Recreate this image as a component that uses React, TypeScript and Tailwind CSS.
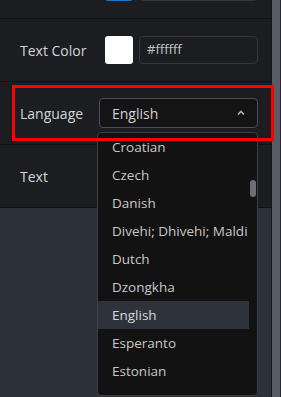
import React from "react";

const items = ["Croatian", "Czech", "Danish", "Divehi; Dhivehi; Maldi", "Dutch", "Dzongkha", "English", "Esperanto", "Estonian"];

function Row({ label, children }: { label: string; children?: React.ReactNode }) {
  return (
    <div className={"h-[63px] flex items-center pl-5 pr-[13px] border-b border-[#101113]"}>
      <div className="w-[79px] shrink-0 text-[14px] text-[#d6d6d6]">{label}</div>
      <div className="flex-1 flex items-center">{children}</div>
    </div>
  );
}

export default function App() {
  return (
    <div className="relative w-[281px] h-[397px] overflow-hidden bg-[#2d313a] flex" style={{ fontFamily: '"Open Sans", "Noto Sans", sans-serif' }}>
      <div className="flex-1 flex flex-col">
        <div className="bg-[#1b1d21] -mt-[44px]">
          <Row label="">
            <div className="w-[28px] h-[28px] ml-1.5 rounded-[3px] bg-[#1f6fd1]" />
            <div className="ml-1.5 flex-1 h-[28px] rounded-[4px] border border-[#33363c]" />
          </Row>
          <Row label="Text Color">
            <div className="w-[28px] h-[28px] ml-1.5 rounded-[3px] bg-white" />
            <div className="ml-1.5 flex-1 h-[28px] rounded-[4px] border border-[#33363c] flex items-center px-[7px] text-[13px] text-[#c4c4c4]">#ffffff</div>
          </Row>
          <Row label="Language">
            <div className="flex-1 h-[30px] rounded-[4px] border border-[#4a4d55] bg-[#141414] flex items-center pl-3 pr-3 text-[14px] text-[#d2d2d2]">
              <span className="flex-1">English</span>
              <svg width="8" height="6" viewBox="0 0 8 6"><path d="M1 4.5 L4 1.5 L7 4.5" stroke="#b0b0b0" strokeWidth="1.6" fill="none" /></svg>
            </div>
          </Row>
          <Row label="Text" />
        </div>
      </div>
      <div className="w-[10px] flex border-l border-[#16181b]">
        <div className="w-[8px] bg-[#575c66]" />
        <div className="flex-1 bg-[#26292f]" />
      </div>

      {/* dropdown */}
      <div className="absolute left-[97px] top-[132px] w-[161px] h-[264px] rounded-[4px] border border-[#3c3f46] bg-[#121212] overflow-hidden">
        <div className="flex flex-col">
          {items.map((it) => (
            <div key={it} className={"h-[28px] w-[151px] flex items-center pl-[14px] text-[13.5px] whitespace-nowrap overflow-hidden " + (it === "English" ? "bg-[#2e323b] text-[#d8d8d8]" : "text-[#c8c8c8]")}>
              {it}
            </div>
          ))}
        </div>
        <div className="absolute left-[152px] top-[47px] w-[6px] h-[17px] rounded-[3px] bg-[#6b6f78]" />
      </div>

      {/* red annotation box */}
      <div className="absolute left-[12px] top-[85px] w-[262px] h-[56px] border-[3px] border-[#ff0000]" />
    </div>
  );
}
